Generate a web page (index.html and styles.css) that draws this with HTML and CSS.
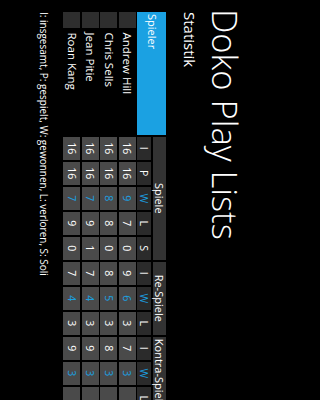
FILE: index.html
```html
<!DOCTYPE html>
<html lang="de">
<head>
<meta charset="utf-8">
<title>Doko Play Lists</title>
<link rel="stylesheet" href="styles.css">
</head>
<body>
<div class="viewport">
<div class="screen">
  <div class="page">
    <h1 class="title">Doko Play Lists</h1>
    <h2 class="subtitle">Statistik</h2>
    <div class="table">
      <div class="player-head">Spieler</div>
      <div class="group span5">Spiele</div>
      <div class="group span3">Re-Spiele</div>
      <div class="group span3">Kontra-Spiele</div>

      <div class="sub">I</div><div class="sub">P</div><div class="sub win">W</div><div class="sub">L</div><div class="sub">S</div>
      <div class="sub">I</div><div class="sub win">W</div><div class="sub">L</div>
      <div class="sub">I</div><div class="sub win">W</div><div class="sub">L</div>

      <div class="avatar"></div><div class="name">Andrew Hill</div>
      <div class="cell">16</div><div class="cell">16</div><div class="cell win">9</div><div class="cell">7</div><div class="cell">0</div>
      <div class="cell">9</div><div class="cell win">6</div><div class="cell">3</div>
      <div class="cell">7</div><div class="cell win">3</div><div class="cell"></div>

      <div class="avatar"></div><div class="name">Chris Sells</div>
      <div class="cell">16</div><div class="cell">16</div><div class="cell win">8</div><div class="cell">8</div><div class="cell">0</div>
      <div class="cell">8</div><div class="cell win">5</div><div class="cell">3</div>
      <div class="cell">8</div><div class="cell win">3</div><div class="cell"></div>

      <div class="avatar"></div><div class="name">Jean Pitie</div>
      <div class="cell">16</div><div class="cell">16</div><div class="cell win">7</div><div class="cell">9</div><div class="cell">1</div>
      <div class="cell">7</div><div class="cell win">4</div><div class="cell">3</div>
      <div class="cell">9</div><div class="cell win">3</div><div class="cell"></div>

      <div class="avatar"></div><div class="name">Roan Kang</div>
      <div class="cell">16</div><div class="cell">16</div><div class="cell win">7</div><div class="cell">9</div><div class="cell">0</div>
      <div class="cell">7</div><div class="cell win">4</div><div class="cell">3</div>
      <div class="cell">9</div><div class="cell win">3</div><div class="cell"></div>
    </div>
    <p class="legend">I: insgesamt, P: gespielt, W: gewonnen, L: verloren, S: Soli</p>
  </div>
</div>
</div>
</body>
</html>
```
FILE: styles.css
```css
html, body {
  margin: 0;
  padding: 0;
  width: 240px;
  height: 400px;
  overflow: hidden;
  background: #000;
}

.viewport {
  width: 240px;
  height: 400px;
  overflow: hidden;
}

.screen {
  width: 400px;
  height: 240px;
  background: #000;
  overflow: hidden;
  transform-origin: 0 0;
  transform: translateX(240px) rotate(90deg);
  font-family: "Open Sans", "Noto Sans", "Liberation Sans", sans-serif;
  color: #fff;
}

.page {
  display: flex;
  flex-direction: column;
  align-items: flex-start;
  padding-left: 12px;
}

.title {
  margin: 0 0 0 -3px;
  font-size: 34.5px;
  line-height: 30px;
  font-weight: 300;
  white-space: nowrap;
}

.subtitle {
  margin: 13px 0 0 0;
  font-size: 15px;
  line-height: 15px;
  font-weight: 400;
}

.table {
  margin-top: 16px;
  display: grid;
  grid-template-columns: 16px 105.5px repeat(11, 23.5px);
  grid-template-rows: 13px 14px repeat(4, 17px);
  column-gap: 1.5px;
  row-gap: 1.5px;
  font-size: 10.5px;
  line-height: 10px;
}

.player-head {
  grid-column: span 2;
  grid-row: span 2;
  background: #1ba1e2;
  display: flex;
  align-items: center;
  padding-left: 2px;
  font-size: 11px;
}

.group {
  background: #333;
  display: flex;
  align-items: center;
  justify-content: center;
  white-space: nowrap;
  font-size: 11px;
}

.span5 { grid-column: span 5; }
.span3 { grid-column: span 3; }

.sub {
  background: #2b2b2b;
  display: flex;
  align-items: center;
  justify-content: center;
}

.avatar {
  background: #2e2e2e;
}

.name {
  display: flex;
  align-items: center;
  padding-left: 3px;
  white-space: nowrap;
  font-size: 11.5px;
}

.cell {
  background: #4a4a4a;
  display: flex;
  align-items: center;
  justify-content: center;
}

.win {
  color: #1ba1e2;
}

.legend {
  margin: 14.5px 0 0 0;
  font-size: 10px;
  line-height: 10px;
  white-space: nowrap;
}
```
